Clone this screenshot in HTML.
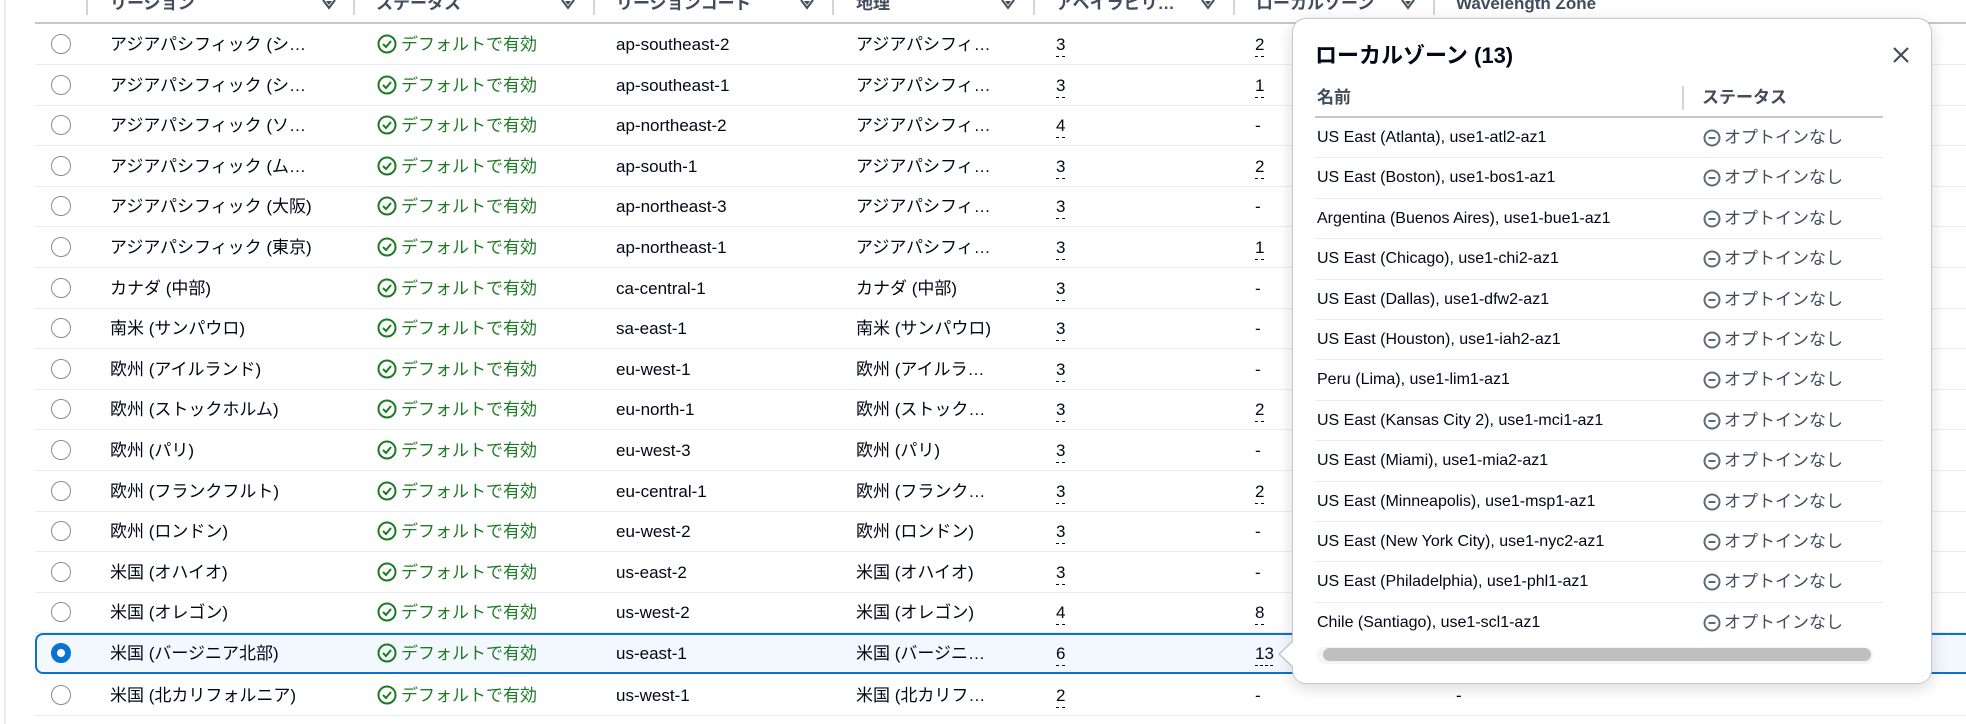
<!DOCTYPE html>
<html><head><meta charset="utf-8"><style>
*{margin:0;padding:0;box-sizing:border-box}
body{width:1966px;height:724px;overflow:hidden;background:#fff;font-family:"Liberation Sans","Noto Sans CJK JP",sans-serif;color:#000716;font-size:17px;position:relative}
.abs{position:absolute;white-space:nowrap}
.hdr{position:absolute;top:-8px;font-weight:bold;color:#414d5c;font-size:17px;line-height:24px}
.sep{position:absolute;top:0;width:2px;height:15px;background:#d1d5db}
.sort{position:absolute;top:0}
.row{position:absolute;left:35px;width:1931px;height:41px;border-bottom:1px solid #e9ebed}
.cell{position:absolute;top:0;line-height:41px;white-space:nowrap}
.radio{position:absolute;left:16px;top:10px;width:20px;height:20px;border-radius:50%;border:1.5px solid #8c8c94;background:#fff}
.ok{color:#1d7a24}
.ok svg{vertical-align:-4px;margin-right:4px}
.dot{text-decoration:underline dashed #000716 1px;text-underline-offset:6px}
.pop{position:absolute;left:1292px;top:18px;width:640px;height:666px;background:#fff;border:1.5px solid #c6c6cd;border-radius:14px;box-shadow:0 4px 16px rgba(0,7,22,0.15)}
.prow{position:absolute;left:22px;width:568px;height:40.4px;border-bottom:1px solid #e9ebed;font-size:16px}
.prow span{position:absolute;top:0;line-height:40px;white-space:nowrap}
.na{left:388px;color:#414d5c;font-size:17px}
.na svg{vertical-align:-4px;margin-right:3px}
</style></head><body>
<div class="abs" style="left:4px;top:0;width:2px;height:724px;background:#e9ebed"></div>
<div class="abs" style="left:35px;top:22px;width:1931px;height:2px;background:#c6c6cd"></div>
<div class="sep" style="left:86px"></div>
<div class="sep" style="left:353px"></div>
<div class="sep" style="left:593px"></div>
<div class="sep" style="left:832px"></div>
<div class="sep" style="left:1033px"></div>
<div class="sep" style="left:1233px"></div>
<div class="sep" style="left:1433px"></div>
<div class="hdr" style="left:110px">リージョン</div>
<div class="hdr" style="left:376px">ステータス</div>
<div class="hdr" style="left:616px">リージョンコード</div>
<div class="hdr" style="left:856px">地理</div>
<div class="hdr" style="left:1056px">アベイラビリ…</div>
<div class="hdr" style="left:1256px">ローカルゾーン</div>
<div class="hdr" style="left:1456px">Wavelength Zone</div>
<svg class="sort" style="left:322px" width="14" height="10"><path d="M1 0 L7 8 L13 0" fill="none" stroke="#414d5c" stroke-width="2"/><path d="M4 1 L7 5 L10 1Z" fill="#414d5c"/></svg>
<svg class="sort" style="left:561px" width="14" height="10"><path d="M1 0 L7 8 L13 0" fill="none" stroke="#414d5c" stroke-width="2"/><path d="M4 1 L7 5 L10 1Z" fill="#414d5c"/></svg>
<svg class="sort" style="left:800px" width="14" height="10"><path d="M1 0 L7 8 L13 0" fill="none" stroke="#414d5c" stroke-width="2"/><path d="M4 1 L7 5 L10 1Z" fill="#414d5c"/></svg>
<svg class="sort" style="left:1001px" width="14" height="10"><path d="M1 0 L7 8 L13 0" fill="none" stroke="#414d5c" stroke-width="2"/><path d="M4 1 L7 5 L10 1Z" fill="#414d5c"/></svg>
<svg class="sort" style="left:1201px" width="14" height="10"><path d="M1 0 L7 8 L13 0" fill="none" stroke="#414d5c" stroke-width="2"/><path d="M4 1 L7 5 L10 1Z" fill="#414d5c"/></svg>
<svg class="sort" style="left:1401px" width="14" height="10"><path d="M1 0 L7 8 L13 0" fill="none" stroke="#414d5c" stroke-width="2"/><path d="M4 1 L7 5 L10 1Z" fill="#414d5c"/></svg>

<div class="row" style="top:24px"><div class="radio"></div><span class="cell" style="left:75px">アジアパシフィック (シ…</span><span class="cell ok" style="left:342px"><svg width="20" height="20"><circle cx="10" cy="10" r="8.5" fill="none" stroke="#1d7a24" stroke-width="2"/><path d="M6 10 L9 13 L14 7" fill="none" stroke="#1d7a24" stroke-width="2"/></svg>デフォルトで有効</span><span class="cell" style="left:581px">ap-southeast-2</span><span class="cell" style="left:821px">アジアパシフィ…</span><span class="cell dot" style="left:1021px">3</span><span class="cell dot" style="left:1220px">2</span></div>
<div class="row" style="top:64.6px"><div class="radio"></div><span class="cell" style="left:75px">アジアパシフィック (シ…</span><span class="cell ok" style="left:342px"><svg width="20" height="20"><circle cx="10" cy="10" r="8.5" fill="none" stroke="#1d7a24" stroke-width="2"/><path d="M6 10 L9 13 L14 7" fill="none" stroke="#1d7a24" stroke-width="2"/></svg>デフォルトで有効</span><span class="cell" style="left:581px">ap-southeast-1</span><span class="cell" style="left:821px">アジアパシフィ…</span><span class="cell dot" style="left:1021px">3</span><span class="cell dot" style="left:1220px">1</span></div>
<div class="row" style="top:105.2px"><div class="radio"></div><span class="cell" style="left:75px">アジアパシフィック (ソ…</span><span class="cell ok" style="left:342px"><svg width="20" height="20"><circle cx="10" cy="10" r="8.5" fill="none" stroke="#1d7a24" stroke-width="2"/><path d="M6 10 L9 13 L14 7" fill="none" stroke="#1d7a24" stroke-width="2"/></svg>デフォルトで有効</span><span class="cell" style="left:581px">ap-northeast-2</span><span class="cell" style="left:821px">アジアパシフィ…</span><span class="cell dot" style="left:1021px">4</span><span class="cell" style="left:1220px">-</span></div>
<div class="row" style="top:145.8px"><div class="radio"></div><span class="cell" style="left:75px">アジアパシフィック (ム…</span><span class="cell ok" style="left:342px"><svg width="20" height="20"><circle cx="10" cy="10" r="8.5" fill="none" stroke="#1d7a24" stroke-width="2"/><path d="M6 10 L9 13 L14 7" fill="none" stroke="#1d7a24" stroke-width="2"/></svg>デフォルトで有効</span><span class="cell" style="left:581px">ap-south-1</span><span class="cell" style="left:821px">アジアパシフィ…</span><span class="cell dot" style="left:1021px">3</span><span class="cell dot" style="left:1220px">2</span></div>
<div class="row" style="top:186.4px"><div class="radio"></div><span class="cell" style="left:75px">アジアパシフィック (大阪)</span><span class="cell ok" style="left:342px"><svg width="20" height="20"><circle cx="10" cy="10" r="8.5" fill="none" stroke="#1d7a24" stroke-width="2"/><path d="M6 10 L9 13 L14 7" fill="none" stroke="#1d7a24" stroke-width="2"/></svg>デフォルトで有効</span><span class="cell" style="left:581px">ap-northeast-3</span><span class="cell" style="left:821px">アジアパシフィ…</span><span class="cell dot" style="left:1021px">3</span><span class="cell" style="left:1220px">-</span></div>
<div class="row" style="top:227px"><div class="radio"></div><span class="cell" style="left:75px">アジアパシフィック (東京)</span><span class="cell ok" style="left:342px"><svg width="20" height="20"><circle cx="10" cy="10" r="8.5" fill="none" stroke="#1d7a24" stroke-width="2"/><path d="M6 10 L9 13 L14 7" fill="none" stroke="#1d7a24" stroke-width="2"/></svg>デフォルトで有効</span><span class="cell" style="left:581px">ap-northeast-1</span><span class="cell" style="left:821px">アジアパシフィ…</span><span class="cell dot" style="left:1021px">3</span><span class="cell dot" style="left:1220px">1</span></div>
<div class="row" style="top:267.6px"><div class="radio"></div><span class="cell" style="left:75px">カナダ (中部)</span><span class="cell ok" style="left:342px"><svg width="20" height="20"><circle cx="10" cy="10" r="8.5" fill="none" stroke="#1d7a24" stroke-width="2"/><path d="M6 10 L9 13 L14 7" fill="none" stroke="#1d7a24" stroke-width="2"/></svg>デフォルトで有効</span><span class="cell" style="left:581px">ca-central-1</span><span class="cell" style="left:821px">カナダ (中部)</span><span class="cell dot" style="left:1021px">3</span><span class="cell" style="left:1220px">-</span></div>
<div class="row" style="top:308.2px"><div class="radio"></div><span class="cell" style="left:75px">南米 (サンパウロ)</span><span class="cell ok" style="left:342px"><svg width="20" height="20"><circle cx="10" cy="10" r="8.5" fill="none" stroke="#1d7a24" stroke-width="2"/><path d="M6 10 L9 13 L14 7" fill="none" stroke="#1d7a24" stroke-width="2"/></svg>デフォルトで有効</span><span class="cell" style="left:581px">sa-east-1</span><span class="cell" style="left:821px">南米 (サンパウロ)</span><span class="cell dot" style="left:1021px">3</span><span class="cell" style="left:1220px">-</span></div>
<div class="row" style="top:348.8px"><div class="radio"></div><span class="cell" style="left:75px">欧州 (アイルランド)</span><span class="cell ok" style="left:342px"><svg width="20" height="20"><circle cx="10" cy="10" r="8.5" fill="none" stroke="#1d7a24" stroke-width="2"/><path d="M6 10 L9 13 L14 7" fill="none" stroke="#1d7a24" stroke-width="2"/></svg>デフォルトで有効</span><span class="cell" style="left:581px">eu-west-1</span><span class="cell" style="left:821px">欧州 (アイルラ…</span><span class="cell dot" style="left:1021px">3</span><span class="cell" style="left:1220px">-</span></div>
<div class="row" style="top:389.4px"><div class="radio"></div><span class="cell" style="left:75px">欧州 (ストックホルム)</span><span class="cell ok" style="left:342px"><svg width="20" height="20"><circle cx="10" cy="10" r="8.5" fill="none" stroke="#1d7a24" stroke-width="2"/><path d="M6 10 L9 13 L14 7" fill="none" stroke="#1d7a24" stroke-width="2"/></svg>デフォルトで有効</span><span class="cell" style="left:581px">eu-north-1</span><span class="cell" style="left:821px">欧州 (ストック…</span><span class="cell dot" style="left:1021px">3</span><span class="cell dot" style="left:1220px">2</span></div>
<div class="row" style="top:430px"><div class="radio"></div><span class="cell" style="left:75px">欧州 (パリ)</span><span class="cell ok" style="left:342px"><svg width="20" height="20"><circle cx="10" cy="10" r="8.5" fill="none" stroke="#1d7a24" stroke-width="2"/><path d="M6 10 L9 13 L14 7" fill="none" stroke="#1d7a24" stroke-width="2"/></svg>デフォルトで有効</span><span class="cell" style="left:581px">eu-west-3</span><span class="cell" style="left:821px">欧州 (パリ)</span><span class="cell dot" style="left:1021px">3</span><span class="cell" style="left:1220px">-</span></div>
<div class="row" style="top:470.6px"><div class="radio"></div><span class="cell" style="left:75px">欧州 (フランクフルト)</span><span class="cell ok" style="left:342px"><svg width="20" height="20"><circle cx="10" cy="10" r="8.5" fill="none" stroke="#1d7a24" stroke-width="2"/><path d="M6 10 L9 13 L14 7" fill="none" stroke="#1d7a24" stroke-width="2"/></svg>デフォルトで有効</span><span class="cell" style="left:581px">eu-central-1</span><span class="cell" style="left:821px">欧州 (フランク…</span><span class="cell dot" style="left:1021px">3</span><span class="cell dot" style="left:1220px">2</span></div>
<div class="row" style="top:511.2px"><div class="radio"></div><span class="cell" style="left:75px">欧州 (ロンドン)</span><span class="cell ok" style="left:342px"><svg width="20" height="20"><circle cx="10" cy="10" r="8.5" fill="none" stroke="#1d7a24" stroke-width="2"/><path d="M6 10 L9 13 L14 7" fill="none" stroke="#1d7a24" stroke-width="2"/></svg>デフォルトで有効</span><span class="cell" style="left:581px">eu-west-2</span><span class="cell" style="left:821px">欧州 (ロンドン)</span><span class="cell dot" style="left:1021px">3</span><span class="cell" style="left:1220px">-</span></div>
<div class="row" style="top:551.8px"><div class="radio"></div><span class="cell" style="left:75px">米国 (オハイオ)</span><span class="cell ok" style="left:342px"><svg width="20" height="20"><circle cx="10" cy="10" r="8.5" fill="none" stroke="#1d7a24" stroke-width="2"/><path d="M6 10 L9 13 L14 7" fill="none" stroke="#1d7a24" stroke-width="2"/></svg>デフォルトで有効</span><span class="cell" style="left:581px">us-east-2</span><span class="cell" style="left:821px">米国 (オハイオ)</span><span class="cell dot" style="left:1021px">3</span><span class="cell" style="left:1220px">-</span></div>
<div class="row" style="top:592.4px"><div class="radio"></div><span class="cell" style="left:75px">米国 (オレゴン)</span><span class="cell ok" style="left:342px"><svg width="20" height="20"><circle cx="10" cy="10" r="8.5" fill="none" stroke="#1d7a24" stroke-width="2"/><path d="M6 10 L9 13 L14 7" fill="none" stroke="#1d7a24" stroke-width="2"/></svg>デフォルトで有効</span><span class="cell" style="left:581px">us-west-2</span><span class="cell" style="left:821px">米国 (オレゴン)</span><span class="cell dot" style="left:1021px">4</span><span class="cell dot" style="left:1220px">8</span></div>
<div class="row" style="top:633px;height:41px;background:#f2f8fd;border:2px solid #0972d3;border-radius:8px;border-right:none;border-top-right-radius:0;border-bottom-right-radius:0"><div class="radio" style="left:14px;top:8px;border:6px solid #0972d3"></div><span class="cell" style="left:73px;line-height:37px">米国 (バージニア北部)</span><span class="cell ok" style="left:340px;line-height:37px"><svg width="20" height="20"><circle cx="10" cy="10" r="8.5" fill="none" stroke="#1d7a24" stroke-width="2"/><path d="M6 10 L9 13 L14 7" fill="none" stroke="#1d7a24" stroke-width="2"/></svg>デフォルトで有効</span><span class="cell" style="left:579px;line-height:37px">us-east-1</span><span class="cell" style="left:819px;line-height:37px">米国 (バージニ…</span><span class="cell dot" style="left:1019px;line-height:37px">6</span><span class="cell dot" style="left:1218px;line-height:37px">13</span></div>
<div class="row" style="top:674.6px"><div class="radio"></div><span class="cell" style="left:75px">米国 (北カリフォルニア)</span><span class="cell ok" style="left:342px"><svg width="20" height="20"><circle cx="10" cy="10" r="8.5" fill="none" stroke="#1d7a24" stroke-width="2"/><path d="M6 10 L9 13 L14 7" fill="none" stroke="#1d7a24" stroke-width="2"/></svg>デフォルトで有効</span><span class="cell" style="left:581px">us-west-1</span><span class="cell" style="left:821px">米国 (北カリフ…</span><span class="cell dot" style="left:1021px">2</span><span class="cell" style="left:1220px">-</span><span class="cell" style="left:1421px">-</span></div>

<svg class="abs" style="left:1276px;top:641px;z-index:3" width="20" height="26"><path d="M17 0 L3 13 L17 26" fill="#fff" stroke="#c6c6cd" stroke-width="1.5"/><rect x="17" y="0" width="4" height="26" fill="#fff"/></svg>
<div class="pop">
<div class="abs" style="left:22px;top:22px;font-size:22px;font-weight:bold;line-height:30px">ローカルゾーン (13)</div>
<svg class="abs" style="left:600px;top:28px" width="16" height="16"><path d="M1 1 L15 15 M15 1 L1 15" stroke="#414d5c" stroke-width="2.2"/></svg>
<div class="abs" style="left:24px;top:67px;font-size:17px;color:#414d5c;font-weight:bold;line-height:24px">名前</div>
<div class="abs" style="left:389px;top:67px;width:2px;height:24px;background:#d1d5db"></div>
<div class="abs" style="left:409px;top:67px;font-size:17px;color:#414d5c;font-weight:bold;line-height:24px">ステータス</div>
<div class="abs" style="left:22px;top:97px;width:568px;height:1.5px;background:#c6c6cd"></div>
<div class="prow" style="top:99px"><span style="left:2px">US East (Atlanta), use1-atl2-az1</span><span class="na"><svg width="18" height="18"><circle cx="9" cy="9" r="7.5" fill="none" stroke="#5f6b7a" stroke-width="2"/><path d="M5.5 9 H12.5" stroke="#5f6b7a" stroke-width="2"/></svg>オプトインなし</span></div>
<div class="prow" style="top:139.4px"><span style="left:2px">US East (Boston), use1-bos1-az1</span><span class="na"><svg width="18" height="18"><circle cx="9" cy="9" r="7.5" fill="none" stroke="#5f6b7a" stroke-width="2"/><path d="M5.5 9 H12.5" stroke="#5f6b7a" stroke-width="2"/></svg>オプトインなし</span></div>
<div class="prow" style="top:179.8px"><span style="left:2px">Argentina (Buenos Aires), use1-bue1-az1</span><span class="na"><svg width="18" height="18"><circle cx="9" cy="9" r="7.5" fill="none" stroke="#5f6b7a" stroke-width="2"/><path d="M5.5 9 H12.5" stroke="#5f6b7a" stroke-width="2"/></svg>オプトインなし</span></div>
<div class="prow" style="top:220.2px"><span style="left:2px">US East (Chicago), use1-chi2-az1</span><span class="na"><svg width="18" height="18"><circle cx="9" cy="9" r="7.5" fill="none" stroke="#5f6b7a" stroke-width="2"/><path d="M5.5 9 H12.5" stroke="#5f6b7a" stroke-width="2"/></svg>オプトインなし</span></div>
<div class="prow" style="top:260.6px"><span style="left:2px">US East (Dallas), use1-dfw2-az1</span><span class="na"><svg width="18" height="18"><circle cx="9" cy="9" r="7.5" fill="none" stroke="#5f6b7a" stroke-width="2"/><path d="M5.5 9 H12.5" stroke="#5f6b7a" stroke-width="2"/></svg>オプトインなし</span></div>
<div class="prow" style="top:301px"><span style="left:2px">US East (Houston), use1-iah2-az1</span><span class="na"><svg width="18" height="18"><circle cx="9" cy="9" r="7.5" fill="none" stroke="#5f6b7a" stroke-width="2"/><path d="M5.5 9 H12.5" stroke="#5f6b7a" stroke-width="2"/></svg>オプトインなし</span></div>
<div class="prow" style="top:341.4px"><span style="left:2px">Peru (Lima), use1-lim1-az1</span><span class="na"><svg width="18" height="18"><circle cx="9" cy="9" r="7.5" fill="none" stroke="#5f6b7a" stroke-width="2"/><path d="M5.5 9 H12.5" stroke="#5f6b7a" stroke-width="2"/></svg>オプトインなし</span></div>
<div class="prow" style="top:381.8px"><span style="left:2px">US East (Kansas City 2), use1-mci1-az1</span><span class="na"><svg width="18" height="18"><circle cx="9" cy="9" r="7.5" fill="none" stroke="#5f6b7a" stroke-width="2"/><path d="M5.5 9 H12.5" stroke="#5f6b7a" stroke-width="2"/></svg>オプトインなし</span></div>
<div class="prow" style="top:422.2px"><span style="left:2px">US East (Miami), use1-mia2-az1</span><span class="na"><svg width="18" height="18"><circle cx="9" cy="9" r="7.5" fill="none" stroke="#5f6b7a" stroke-width="2"/><path d="M5.5 9 H12.5" stroke="#5f6b7a" stroke-width="2"/></svg>オプトインなし</span></div>
<div class="prow" style="top:462.6px"><span style="left:2px">US East (Minneapolis), use1-msp1-az1</span><span class="na"><svg width="18" height="18"><circle cx="9" cy="9" r="7.5" fill="none" stroke="#5f6b7a" stroke-width="2"/><path d="M5.5 9 H12.5" stroke="#5f6b7a" stroke-width="2"/></svg>オプトインなし</span></div>
<div class="prow" style="top:503px"><span style="left:2px">US East (New York City), use1-nyc2-az1</span><span class="na"><svg width="18" height="18"><circle cx="9" cy="9" r="7.5" fill="none" stroke="#5f6b7a" stroke-width="2"/><path d="M5.5 9 H12.5" stroke="#5f6b7a" stroke-width="2"/></svg>オプトインなし</span></div>
<div class="prow" style="top:543.4px"><span style="left:2px">US East (Philadelphia), use1-phl1-az1</span><span class="na"><svg width="18" height="18"><circle cx="9" cy="9" r="7.5" fill="none" stroke="#5f6b7a" stroke-width="2"/><path d="M5.5 9 H12.5" stroke="#5f6b7a" stroke-width="2"/></svg>オプトインなし</span></div>
<div class="prow" style="top:583.8px;border-bottom:none"><span style="left:2px">Chile (Santiago), use1-scl1-az1</span><span class="na"><svg width="18" height="18"><circle cx="9" cy="9" r="7.5" fill="none" stroke="#5f6b7a" stroke-width="2"/><path d="M5.5 9 H12.5" stroke="#5f6b7a" stroke-width="2"/></svg>オプトインなし</span></div>
<div class="abs" style="left:24px;top:628px;width:556px;height:17px;background:#f4f4f4;border-radius:8px"></div>
<div class="abs" style="left:30px;top:629px;width:548px;height:13px;background:#bfbfbf;border-radius:7px"></div>
</div>
<div class="abs" style="left:35px;top:715px;width:1931px;height:1px;background:#e9ebed"></div>
</body></html>
